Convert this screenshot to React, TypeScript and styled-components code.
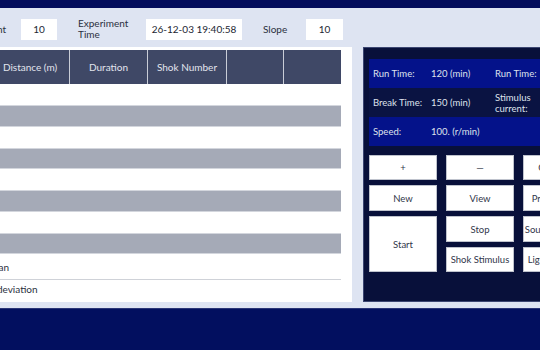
import React from 'react'
import styled, { createGlobalStyle } from 'styled-components'

const GlobalStyle = createGlobalStyle`
  html, body {
    margin: 0;
    padding: 0;
    overflow: hidden;
    background: #dee4f2;
  }
  * {
    box-sizing: border-box;
  }
`

const Frame = styled.div`
  width: 540px;
  height: 350px;
  overflow: hidden;
  display: flex;
  flex-direction: column;
  background: #dee4f2;
  font-family: Lato, 'Open Sans', sans-serif;
  font-size: 10px;
`

const TopBar = styled.div`
  height: 8px;
  flex: none;
  background: #030d5c;
`

const BottomBar = styled.div`
  height: 42px;
  flex: none;
  margin-top: 6px;
  background: #020f5f;
  border-top: 1px solid #2a3577;
`

// the page is wider than the window; the stage is shifted left and clipped
const Stage = styled.div`
  width: 780px;
  margin-left: -90px;
  display: flex;
  flex-direction: column;
`

const Toolbar = styled.div`
  height: 39px;
  display: flex;
  align-items: center;
  gap: 21px;
  padding: 3px 0 0 62px;
`

const Field = styled.div`
  display: flex;
  align-items: center;
  gap: 15px;
`

const FieldLabel = styled.div<{ $width: number; $right?: boolean }>`
  width: ${({ $width }) => $width}px;
  color: #2b3040;
  line-height: 11px;
  text-align: ${({ $right }) => ($right ? 'right' : 'left')};
`

const FieldInput = styled.div<{ $width: number }>`
  width: ${({ $width }) => $width}px;
  height: 21px;
  background: #ffffff;
  color: #222633;
  display: flex;
  align-items: center;
  justify-content: center;
`

const Main = styled.div`
  height: 255px;
  display: flex;
  gap: 11px;
  padding-left: 6px;
`

const TablePanel = styled.div`
  width: 436px;
  flex: none;
  background: #ffffff;
  padding: 3px 11px 4px 3px;
  display: flex;
  flex-direction: column;
`

const cols = '71px 79px 78px 79px 57px 58px'

const HeadRow = styled.div`
  display: grid;
  grid-template-columns: ${cols};
  height: 34px;
  background: #3f4866;
`

const HeadCell = styled.div`
  display: flex;
  align-items: center;
  justify-content: center;
  color: #e2e5ee;
  border-left: 1px solid #c9cdd7;
  &:first-child {
    border-left: none;
  }
`

const DataRow = styled.div<{ $striped: boolean }>`
  height: 21.25px;
  background: ${({ $striped }) => ($striped ? '#a5aab7' : '#ffffff')};
  border-top: 1px solid ${({ $striped }) => ($striped ? '#d3d6dd' : 'transparent')};
  border-bottom: 1px solid ${({ $striped }) => ($striped ? '#d3d6dd' : 'transparent')};
`

const SummaryRow = styled.div<{ $height: number; $line?: boolean }>`
  display: grid;
  grid-template-columns: 155px 1fr;
  height: ${({ $height }) => $height}px;
  align-items: center;
  border-bottom: 1px solid ${({ $line }) => ($line ? '#cfd2d8' : 'transparent')};
`

const SummaryLabel = styled.div`
  text-align: center;
  color: #2b3040;
`

const ControlPanel = styled.div`
  width: 310px;
  flex: none;
  background: #08103a;
  border: 1px solid #3c4672;
  padding: 11px 5px 0 5px;
  display: flex;
  flex-direction: column;
  gap: 9px;
`

const InfoRow = styled.div<{ $blue: boolean }>`
  height: 29px;
  display: grid;
  grid-template-columns: 58px 64px 58px 1fr;
  align-items: center;
  padding-left: 4px;
  background: ${({ $blue }) => ($blue ? '#04128a' : '#0a1342')};
  color: #dfe2ec;
  font-size: 9.5px;
`

const InfoText = styled.div`
  line-height: 11px;
`

const InfoBlock = styled.div`
  display: flex;
  flex-direction: column;
`

const ButtonGrid = styled.div`
  display: grid;
  grid-template-columns: repeat(4, 68px);
  grid-template-rows: 25px 26px 26px 25px;
  column-gap: 9px;
  row-gap: 5px;
`

const PadButton = styled.button<{ $tall?: boolean }>`
  grid-row: ${({ $tall }) => ($tall ? 'span 2' : 'auto')};
  background: #ffffff;
  border: 1px solid #bfc3cd;
  padding: 0;
  font-family: inherit;
  font-size: 9.5px;
  color: #30364a;
  white-space: nowrap;
  overflow: hidden;
  display: flex;
  align-items: center;
  justify-content: center;
`

const headers = ['No.', 'Distance (m)', 'Duration', 'Shok Number', '', '']

const info = [
  { blue: true, cells: ['Run Time:', '120 (min)', 'Run Time:', '30 (min)'] },
  { blue: false, cells: ['Break Time:', '150 (min)', 'Stimulus current:', '1.0 (mA)'] },
  { blue: true, cells: ['Speed:', '100. (r/min)', '', ''] },
]

export default function App() {
  return (
    <Frame>
      <GlobalStyle />
      <TopBar />
      <Stage>
        <Toolbar>
          <Field>
            <FieldLabel $width={34} $right>
              Weight
            </FieldLabel>
            <FieldInput $width={36}>10</FieldInput>
          </Field>
          <Field>
            <FieldLabel $width={53}>
              Experiment
              <br />
              Time
            </FieldLabel>
            <FieldInput $width={96}>26-12-03 19:40:58</FieldInput>
          </Field>
          <Field>
            <FieldLabel $width={28}>Slope</FieldLabel>
            <FieldInput $width={37}>10</FieldInput>
          </Field>
        </Toolbar>
        <Main>
          <TablePanel>
            <HeadRow>
              {headers.map((h, i) => (
                <HeadCell key={i}>{h}</HeadCell>
              ))}
            </HeadRow>
            {Array.from({ length: 8 }).map((_, i) => (
              <DataRow key={i} $striped={i % 2 === 1} />
            ))}
            <SummaryRow $height={26} $line>
              <SummaryLabel>Mean</SummaryLabel>
            </SummaryRow>
            <SummaryRow $height={18}>
              <SummaryLabel>Standard deviation</SummaryLabel>
            </SummaryRow>
          </TablePanel>
          <ControlPanel>
            <InfoBlock>
              {info.map((row, i) => (
                <InfoRow key={i} $blue={row.blue}>
                  {row.cells.map((c, j) => (
                    <InfoText key={j}>{c}</InfoText>
                  ))}
                </InfoRow>
              ))}
            </InfoBlock>
            <ButtonGrid>
              <PadButton>+</PadButton>
              <PadButton>—</PadButton>
              <PadButton>Calibrate</PadButton>
              <PadButton>Exit</PadButton>
              <PadButton>New</PadButton>
              <PadButton>View</PadButton>
              <PadButton>Print Report</PadButton>
              <PadButton>Export</PadButton>
              <PadButton $tall>Start</PadButton>
              <PadButton>Stop</PadButton>
              <PadButton>Sound Stimulus</PadButton>
              <PadButton>Reset</PadButton>
              <PadButton>Shok Stimulus</PadButton>
              <PadButton>Light Stimulus</PadButton>
              <PadButton>Settings</PadButton>
            </ButtonGrid>
          </ControlPanel>
        </Main>
      </Stage>
      <BottomBar />
    </Frame>
  )
}
